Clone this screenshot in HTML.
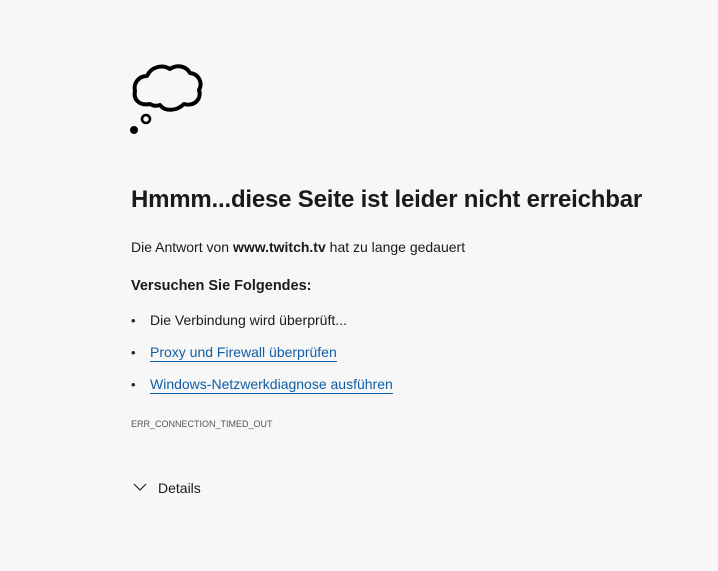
<!DOCTYPE html>
<html><head><meta charset="utf-8"><style>
body{margin:0;width:718px;height:571px;background:#f7f7f7;font-family:"Liberation Sans",sans-serif;color:#1a1a1a;position:relative;overflow:hidden}
.a{position:absolute;white-space:nowrap}
h1{position:absolute;left:131px;top:186px;margin:0;font-size:24px;font-weight:bold;letter-spacing:-0.2px;white-space:nowrap}
.t{font-size:14px}
a{color:#0f5ea8;text-decoration:none;border-bottom:1px solid #0f5ea8;padding-bottom:1px}
.b{position:absolute;left:131px;font-size:13px}
</style></head><body>
<svg class="a" style="left:125px;top:58px" width="85" height="82" viewBox="125 58 85 82">
<path d="M150 104 C140 106 133 100 135 91 C133 83 139 76 147 76 C151 67 162 64 170 69 C177 64 186 66 190 73 C199 74 203 83 199 90 C202 99 194 107 184 104 C177 111 165 112 160 105 C157 106 153 106 150 104 Z" fill="none" stroke="#000" stroke-width="4" stroke-linejoin="round"/>
<circle cx="146" cy="119" r="4" fill="none" stroke="#000" stroke-width="2.6"/>
<circle cx="134" cy="130" r="4" fill="#000"/>
</svg>
<h1>Hmmm...diese Seite ist leider nicht erreichbar</h1>
<div class="a t" style="left:131px;top:239px">Die Antwort von <b>www.twitch.tv</b> hat zu lange gedauert</div>
<div class="a" style="left:131px;top:278px;font-size:14.5px;font-weight:bold">Versuchen Sie Folgendes:</div>
<div class="b" style="top:313px">•</div><div class="a t" style="left:150px;top:312px">Die Verbindung wird überprüft...</div>
<div class="b" style="top:345px">•</div><div class="a t" style="left:150px;top:344px"><a>Proxy und Firewall überprüfen</a></div>
<div class="b" style="top:377px">•</div><div class="a t" style="left:150px;top:376px"><a>Windows-Netzwerkdiagnose ausführen</a></div>
<div class="a" style="left:131px;top:419px;font-size:9px;color:#555">ERR_CONNECTION_TIMED_OUT</div>
<svg class="a" style="left:133px;top:482px" width="14" height="10"><path d="M1 2 L7 8 L13 2" fill="none" stroke="#222" stroke-width="1.2"/></svg>
<div class="a t" style="left:158px;top:480px">Details</div>
</body></html>
